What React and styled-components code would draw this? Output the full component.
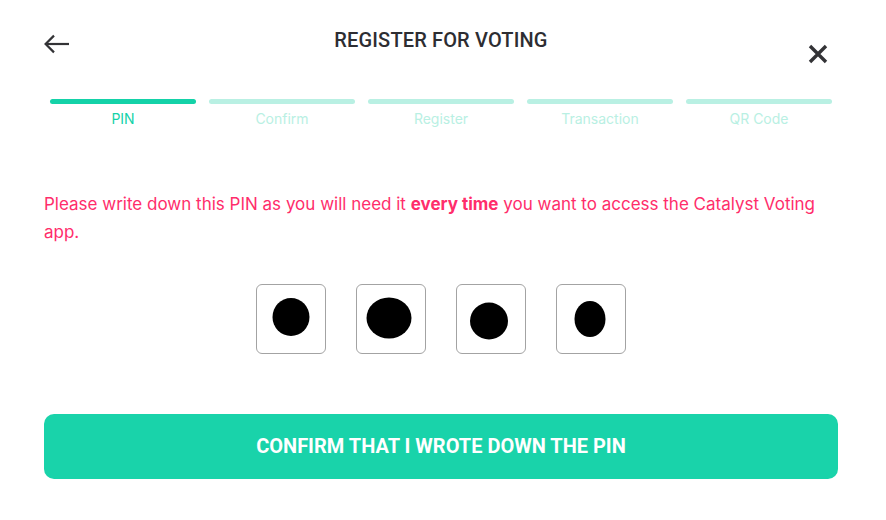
import React from "react";
import styled, { createGlobalStyle } from "styled-components";

const Global = createGlobalStyle`
  html, body { margin: 0; padding: 0; background: #ffffff; }
  * { box-sizing: border-box; }
`;

const Page = styled.div`
  width: 886px;
  height: 520px;
  padding: 30px 48px 0 44px;
  background: #ffffff;
  font-family: Inter, "Noto Sans", sans-serif;
`;

const Header = styled.header`
  display: grid;
  grid-template-columns: 1fr auto 1fr;
  height: 69px;
`;

const IconButton = styled.button`
  border: 0;
  background: none;
  padding: 0;
  margin: ${(p) => p.$margin || "0"};
  justify-self: ${(p) => p.$justify || "start"};
  align-self: start;
  display: flex;
  cursor: pointer;
  color: #333336;
`;

const Title = styled.h1`
  margin: 0;
  font-family: Roboto, "Liberation Sans", sans-serif;
  font-weight: 500;
  font-size: 20px;
  line-height: 20px;
  letter-spacing: 0.15px;
  color: #2d2d32;
`;

const Steps = styled.div`
  display: grid;
  grid-template-columns: repeat(5, 1fr);
  column-gap: 13px;
  margin: 0 6px;
`;

const Step = styled.div`
  display: flex;
  flex-direction: column;
  align-items: center;
`;

const Bar = styled.div`
  width: 100%;
  height: 5px;
  border-radius: 3px;
  background: ${(p) => (p.$active ? "#14d2a8" : "#b9f0e3")};
`;

const StepLabel = styled.span`
  margin-top: 5px;
  font-size: 14px;
  line-height: 20px;
  color: ${(p) => (p.$active ? "#14d2a8" : "#b9f0e3")};
`;

const Notice = styled.p`
  margin: 61px 0 0;
  font-size: 17px;
  line-height: 28px;
  color: #ff2d6b;
  b { font-weight: 700; }
`;

const PinRow = styled.div`
  display: flex;
  justify-content: center;
  gap: 30px;
  margin-top: 38px;
`;

const PinBox = styled.div`
  width: 70px;
  height: 70px;
  border: 1px solid #a3a3a3;
  border-radius: 6px;
  display: flex;
  align-items: center;
  justify-content: center;
`;

const Dot = styled.span`
  display: block;
  width: ${(p) => p.$w}px;
  height: ${(p) => p.$h}px;
  border-radius: 50%;
  background: #000;
  transform: translate(${(p) => p.$dx}px, ${(p) => p.$dy}px);
`;

const ConfirmButton = styled.button`
  display: block;
  width: 100%;
  height: 65px;
  margin-top: 60px;
  padding: 0 0 2px;
  border: 0;
  border-radius: 10px;
  background: #19d3aa;
  color: #ffffff;
  font-family: Roboto, "Liberation Sans", sans-serif;
  font-weight: 700;
  font-size: 20px;
  text-transform: uppercase;
  cursor: pointer;
`;

const steps = ["PIN", "Confirm", "Register", "Transaction", "QR Code"];
const dots = [
  { w: 37, h: 38, dx: -0.5, dy: -2 },
  { w: 45, h: 41, dx: -2.5, dy: -1.5 },
  { w: 38, h: 37, dx: -2, dy: 1.5 },
  { w: 31, h: 36, dx: -1.5, dy: 0 },
];

export default function App() {
  return (
    <Page>
      <Global />
      <Header>
        <IconButton $margin="4px 0 0 0" aria-label="Back">
          <svg width="26" height="20" viewBox="0 0 26 20" fill="none">
            <path d="M25 10H2.2" stroke="currentColor" strokeWidth="2.2" />
            <path d="M10 1.6L1.6 10L10 18.4" stroke="currentColor" strokeWidth="2.2" />
          </svg>
        </IconButton>
        <Title>REGISTER FOR VOTING</Title>
        <IconButton $justify="end" $margin="14px 10px 0 0" aria-label="Close">
          <svg width="20" height="20" viewBox="0 0 20 20" fill="none">
            <path d="M2 2L18 18M18 2L2 18" stroke="currentColor" strokeWidth="3.4" />
          </svg>
        </IconButton>
      </Header>
      <Steps>
        {steps.map((s, i) => (
          <Step key={s}>
            <Bar $active={i === 0} />
            <StepLabel $active={i === 0}>{s}</StepLabel>
          </Step>
        ))}
      </Steps>
      <Notice>
        Please write down this PIN as you will need it <b>every time</b> you want to access the Catalyst Voting app.
      </Notice>
      <PinRow>
        {dots.map((d, i) => (
          <PinBox key={i}>
            <Dot $w={d.w} $h={d.h} $dx={d.dx} $dy={d.dy} />
          </PinBox>
        ))}
      </PinRow>
      <ConfirmButton>Confirm that I wrote down the PIN</ConfirmButton>
    </Page>
  );
}
